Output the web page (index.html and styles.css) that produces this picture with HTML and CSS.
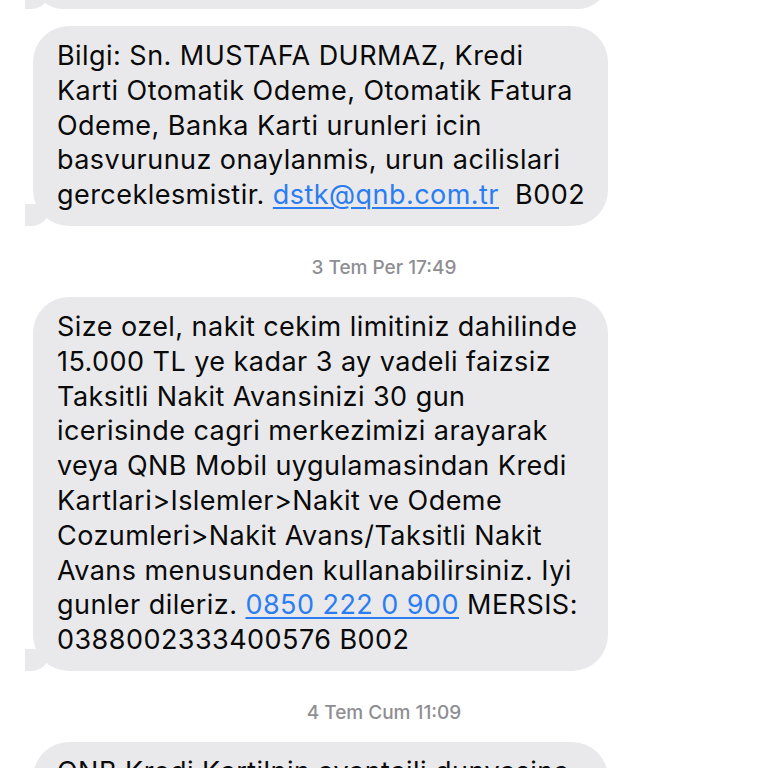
FILE: index.html
```html
<!DOCTYPE html>
<html>
<head>
<meta charset="utf-8">
<link rel="stylesheet" href="styles.css">
</head>
<body>
<div class="thread">
  <div class="bubble prev"><span class="line">&nbsp;</span></div>
  <div class="bubble b1">
    <span class="line">Bilgi: Sn. MUSTAFA DURMAZ, Kredi</span>
    <span class="line">Karti Otomatik Odeme, Otomatik Fatura</span>
    <span class="line">Odeme, Banka Karti urunleri icin</span>
    <span class="line">basvurunuz onaylanmis, urun acilislari</span>
    <span class="line">gerceklesmistir. <a class="link">dstk@qnb.com.tr</a>&nbsp; B002</span>
  </div>
  <div class="stamp">3 Tem Per 17:49</div>
  <div class="bubble b2">
    <span class="line">Size ozel, nakit cekim limitiniz dahilinde</span>
    <span class="line">15.000 TL ye kadar 3 ay vadeli faizsiz</span>
    <span class="line">Taksitli Nakit Avansinizi 30 gun</span>
    <span class="line">icerisinde cagri merkezimizi arayarak</span>
    <span class="line">veya QNB Mobil uygulamasindan Kredi</span>
    <span class="line">Kartlari&gt;Islemler&gt;Nakit ve Odeme</span>
    <span class="line">Cozumleri&gt;Nakit Avans/Taksitli Nakit</span>
    <span class="line">Avans menusunden kullanabilirsiniz. Iyi</span>
    <span class="line">gunler dileriz. <a class="link">0850 222 0 900</a> MERSIS:</span>
    <span class="line">0388002333400576 B002</span>
  </div>
  <div class="stamp">4 Tem Cum 11:09</div>
  <div class="bubble b3">
    <span class="line">QNB Kredi Kartilnin avantajli dunyasina</span>
    <span class="line">&nbsp;</span>
  </div>
</div>
</body>
</html>
```
FILE: styles.css
```css
html, body {
  margin: 0;
  padding: 0;
  background: #ffffff;
}
body {
  width: 768px;
  height: 768px;
  overflow: hidden;
  font-family: "Inter", "Liberation Sans", Arial, sans-serif;
}
.thread {
  display: flex;
  flex-direction: column;
  align-items: flex-start;
  padding-left: 33px;
}
.bubble {
  position: relative;
  box-sizing: border-box;
  width: 575px;
  background: #e9e9eb;
  border-radius: 36px;
  padding: 13px 16px 13px 24px;
  color: #0a0a0a;
  font-size: 27px;
  line-height: 34.8px;
  letter-spacing: 0.45px;
}
.bubble::before {
  content: "";
  position: absolute;
  bottom: 0;
  left: -8px;
  width: 24px;
  height: 22px;
  background: #e9e9eb;
  border-bottom-right-radius: 18px 16px;
}
.bubble::after {
  content: "";
  position: absolute;
  bottom: 0;
  left: -26px;
  width: 18px;
  height: 24px;
  background: #ffffff;
  border-bottom-right-radius: 12px;
}
.line {
  display: block;
  white-space: nowrap;
}
.link {
  color: #2b7df2;
  text-decoration: underline;
  text-decoration-thickness: 1.5px;
  text-underline-offset: 3px;
}
.prev {
  height: 60px;
  margin-top: -51px;
}
.b1 {
  margin-top: 17px;
}
.stamp {
  align-self: stretch;
  margin-left: -33px;
  text-align: center;
  color: #8e8e93;
  font-size: 19px;
  font-weight: 500;
  line-height: 22px;
  padding: 31px 0 18px;
}
.b3 {
  height: 80px;
}
```
